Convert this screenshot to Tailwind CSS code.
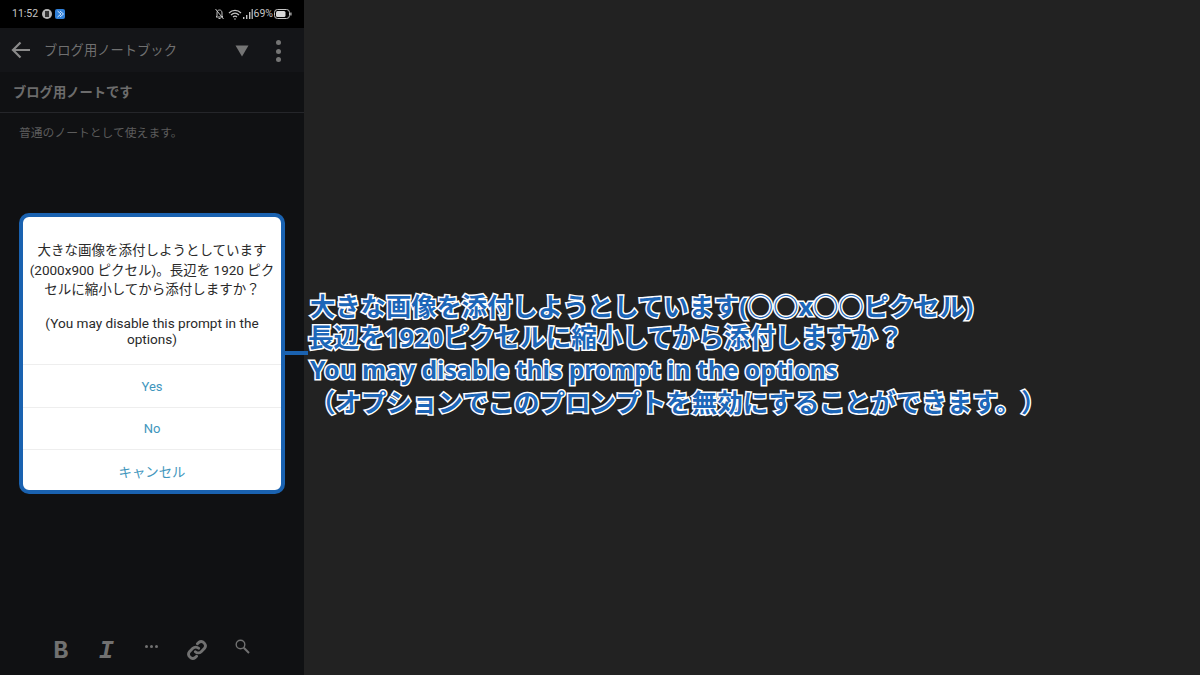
<!DOCTYPE html>
<html lang="ja">
<head>
    <meta charset="UTF-8">
    <meta name="viewport" content="width=device-width, initial-scale=1.0">
    <title>ブログ用ノートブック</title>
    <script src="https://cdn.jsdelivr.net/npm/@tailwindcss/browser@4"></script>
</head>
<body class="bg-[#222222] font-['Roboto','Noto_Sans_CJK_JP',sans-serif] overflow-hidden">
    <div class="flex w-[1200px] h-[675px]">
        <!-- phone screen -->
        <div class="relative flex flex-col w-[304px] h-full bg-[#101113] shrink-0">
            <div class="flex items-center h-[28px] bg-black pl-[12px] pr-[12px] text-[10.5px] text-[#c4c4c4]">
                <span>11:52</span>
                <span class="ml-[4px] flex items-center justify-center w-[10px] h-[10px] rounded-full bg-[#b5b5b5]"><span class="w-[4px] h-[6px] bg-[#333]"></span></span>
                <svg class="ml-[3px]" width="10" height="10" viewBox="0 0 10 10"><rect width="10" height="10" rx="2" fill="#2f7fd8"/><path d="M2.5 2 L6 5 L2.5 8 M5 2 L8.5 5 L5 8" fill="none" stroke="#cfe3fa" stroke-width="1"/></svg>
                <div class="ml-auto flex items-center gap-[1px]">
                    <svg width="11" height="12" viewBox="0 0 11 12" fill="none" stroke="#c4c4c4" stroke-width="1"><path d="M2 9 L3 8 V5 C3 3 4 2 5.5 2 C7 2 8 3 8 5 V8 L9 9 Z M4.5 10.5 H6.5 M1.5 1 L9.5 11"/></svg>
                    <svg class="ml-[2px]" width="14" height="11" viewBox="0 0 14 11" fill="none" stroke="#c4c4c4" stroke-width="1.2"><path d="M1 4 C4.5 0.5 9.5 0.5 13 4 M3 6 C5.5 3.8 8.5 3.8 11 6 M5 8 C6.2 7 7.8 7 9 8"/><circle cx="7" cy="10" r="0.8" fill="#c4c4c4" stroke="none"/></svg>
                    <svg width="10" height="10" viewBox="0 0 10 10" fill="#c4c4c4"><rect x="0" y="8" width="1.4" height="2"/><rect x="3" y="6" width="1.4" height="4"/><rect x="6" y="3" width="1.4" height="7"/><rect x="8.6" y="0" width="1.2" height="10"/></svg>
                    <span>69%</span>
                    <svg width="18" height="10" viewBox="0 0 18 10"><rect x="0.5" y="0.5" width="15" height="9" rx="3" fill="none" stroke="#c4c4c4"/><rect x="2" y="2" width="9.5" height="6" rx="1.5" fill="#d8d8d8"/><rect x="16.3" y="3.5" width="1.2" height="3" fill="#c4c4c4"/></svg>
                </div>
            </div>
            <div class="flex items-center h-[44px] pt-[2px] bg-[#141518] pl-[11px]">
                <svg class="-mt-[2px]" width="20" height="18" viewBox="0 0 20 18" fill="none" stroke="#8a8a8a" stroke-width="2.2"><path d="M19 9 H2 M9.5 1.5 L2 9 L9.5 16.5"/></svg>
                <span class="ml-[13px] text-[13.3px] text-[#707070]">ブログ用ノートブック</span>
                <svg class="ml-auto" width="14" height="12" viewBox="0 0 14 12"><path d="M0.5 0.5 H13.5 L7 11.5 Z" fill="#757575"/></svg>
                <div class="ml-[27px] mr-[23px] flex flex-col gap-[3.5px]">
                    <span class="w-[5px] h-[5px] rounded-full bg-[#757575]"></span>
                    <span class="w-[5px] h-[5px] rounded-full bg-[#757575]"></span>
                    <span class="w-[5px] h-[5px] rounded-full bg-[#757575]"></span>
                </div>
            </div>
            <div class="flex items-center h-[41px] pt-[1px] pl-[13px] border-b border-[#25262a] text-[13.3px] font-bold text-[#6c6c6c]">ブログ用ノートです</div>
            <p class="pl-[19px] pt-[12px] text-[11.8px] text-[#5c5c5c]">普通のノートとして使えます。</p>
            <div class="mt-auto flex items-center h-[50px] pl-[38px] pb-[1px] text-[#717171]">
                <span class="w-[45.5px] pt-[4px] text-center font-['Liberation_Mono'] font-bold text-[25px]">B</span>
                <span class="w-[45.5px] pt-[4px] text-center font-['Liberation_Mono'] font-bold italic text-[25px]">I</span>
                <div class="w-[45.5px] flex justify-center gap-[2px] mb-[6px]">
                    <span class="w-[3px] h-[3px] rounded-full bg-[#717171]"></span>
                    <span class="w-[3px] h-[3px] rounded-full bg-[#717171]"></span>
                    <span class="w-[3px] h-[3px] rounded-full bg-[#717171]"></span>
                </div>
                <div class="w-[45.5px] flex justify-center">
                    <svg width="20" height="20" viewBox="0 0 24 24" fill="none" stroke="#717171" stroke-width="3.4" stroke-linecap="round"><path d="M10 14 a5 5 0 0 0 7 0 l4-4 a5 5 0 0 0-7-7 l-1.5 1.5"/><path d="M14 10 a5 5 0 0 0-7 0 l-4 4 a5 5 0 0 0 7 7 l1.5-1.5"/></svg>
                </div>
                <div class="w-[45.5px] flex justify-center mb-[6px]">
                    <svg width="15" height="15" viewBox="0 0 15 15" fill="none" stroke="#717171" stroke-width="1.4"><circle cx="5.5" cy="5.5" r="4.3"/><path d="M8.8 8.8 L14 14" stroke-width="2"/></svg>
                </div>
            </div>

            <!-- dialog -->
            <div class="absolute left-[19px] top-[213px] w-[266px] h-[281px] flex flex-col bg-white border-[4px] border-[#1a62b0] rounded-[10px] overflow-hidden text-center">
                <div class="pt-[24px] h-[147px] text-[#2a2a2a]">
                    <p class="text-[13.5px] leading-[19.5px] [text-spacing-trim:space-all]">大きな画像を添付しようとしています<br>(2000x900 ピクセル)。長辺を 1920 ピク<br>セルに縮小してから添付しますか？</p>
                    <p class="mt-[15px] text-[13.6px] leading-[16px]">(You may disable this prompt in the<br>options)</p>
                </div>
                <div class="flex items-center justify-center h-[43px] border-t border-[#eeeeee] text-[13px] text-[#3f96bd] pt-[1px]">Yes</div>
                <div class="flex items-center justify-center h-[42px] border-t border-[#eeeeee] text-[13px] text-[#3f96bd]">No</div>
                <div class="flex items-center justify-center h-[41px] pt-[6px] border-t border-[#eeeeee] text-[13.4px] text-[#3f96bd]">キャンセル</div>
            </div>
            <!-- connector -->
            <div class="absolute left-[284px] top-[351px] w-[24px] h-[4px] bg-[#1a62b0]"></div>
        </div>

        <!-- annotation -->
        <div class="flex-1 pt-[290px] pl-[6px] whitespace-nowrap font-['Noto_Sans','Noto_Sans_CJK_JP',sans-serif] font-bold leading-[32px] text-[#1c66b8] [text-spacing-trim:space-all] [-webkit-text-stroke:3px_white] [paint-order:stroke_fill]">
            <p class="text-[25.3px]">大きな画像を添付しようとしています(○○x○○ピクセル)</p>
            <p class="text-[25.6px] -ml-[2px]">長辺を1920ピクセルに縮小してから添付しますか？</p>
            <p class="text-[24.7px]">You may disable this prompt in the options</p>
            <p class="text-[25.5px]">（オプションでこのプロンプトを無効にすることができます。）</p>
        </div>
    </div>
</body>
</html>
